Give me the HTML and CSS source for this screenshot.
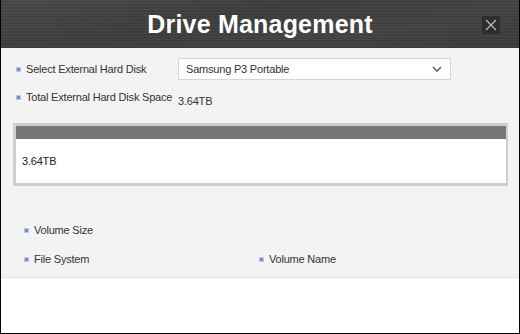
FILE: index.html
```html
<!DOCTYPE html>
<html lang="en">
<head>
    <meta charset="UTF-8">
    <title>Drive Management</title>
    <link rel="stylesheet" href="styles.css">
</head>
<body>
    <div class="window">
        <div class="header">
            <h1>Drive Management</h1>
            <div class="close-button">
                <svg width="12" height="12" viewBox="0 0 12 12">
                    <path d="M1 1 L11 11 M11 1 L1 11" stroke="#bdbdbd" stroke-width="1.2" fill="none"/>
                </svg>
            </div>
        </div>

        <div class="content">
            <div class="row">
                <span class="label"><i class="bullet"></i>Select External Hard Disk</span>
                <div class="select-box">
                    <span>Samsung P3 Portable</span>
                    <svg width="10" height="7" viewBox="0 0 10 7">
                        <path d="M1 1 L5 5 L9 1" stroke="#666" stroke-width="1.6" fill="none"/>
                    </svg>
                </div>
            </div>

            <div class="row row-total">
                <span class="label"><i class="bullet"></i>Total External Hard Disk Space</span>
                <span class="value">3.64TB</span>
            </div>

            <div class="disk-bar">
                <div class="disk-bar-top"></div>
                <div class="disk-bar-body">3.64TB</div>
            </div>

            <div class="volume-info">
                <span class="label"><i class="bullet"></i>Volume Size</span>
                <div class="volume-row">
                    <span class="label col"><i class="bullet"></i>File System</span>
                    <span class="label"><i class="bullet"></i>Volume Name</span>
                </div>
            </div>
        </div>

        <div class="footer"></div>
    </div>
</body>
</html>
```

FILE: styles.css
```css
:root {
    --panel-color: #f3f3f3;
    --text-color: #333;
    --bullet-color: #6e8fcf;
    --border-color: #cfcfcf;
}
body {
    margin: 0;
    padding: 0;
    font-family: "Liberation Sans", Arial, sans-serif;
    font-size: 11px;
    letter-spacing: -0.2px;
    color: var(--text-color);
}
.window {
    width: 520px;
    height: 334px;
    box-sizing: border-box;
    border: 1px solid #000;
    border-top: none;
    display: flex;
    flex-direction: column;
    background: #fff;
}
.header {
    height: 48px;
    flex-shrink: 0;
    position: relative;
    display: flex;
    align-items: center;
    justify-content: center;
    background:
        repeating-linear-gradient(180deg, rgba(255, 255, 255, 0.03) 0 1px, rgba(0, 0, 0, 0.04) 1px 3px),
        linear-gradient(170deg, #4a4a4a 0%, #3e3e3e 40%, #444 70%, #3a3a3a 100%);
}
h1 {
    margin: 0;
    color: #fff;
    font-size: 25px;
    font-weight: bold;
    letter-spacing: 0.2px;
}
.close-button {
    position: absolute;
    top: 16px;
    right: 19px;
    width: 18px;
    height: 18px;
    background: #2e2e2e;
    display: flex;
    align-items: center;
    justify-content: center;
}
.content {
    background: var(--panel-color);
    height: 230px;
    flex-shrink: 0;
    border-bottom: 1px solid #e2e2e2;
    padding: 10px 12px 0 15px;
    box-sizing: border-box;
}
.row {
    display: flex;
    align-items: center;
    height: 22px;
}
.row-total {
    margin-top: 11px;
    height: 18px;
    align-items: flex-start;
}
.label {
    display: inline-flex;
    align-items: center;
    white-space: nowrap;
}
.row .label {
    width: 162px;
    flex-shrink: 0;
}
.bullet {
    width: 5px;
    height: 5px;
    background: var(--bullet-color);
    border: 1px solid #b9c9ea;
    box-sizing: border-box;
    margin-right: 5px;
}
.select-box {
    width: 273px;
    height: 22px;
    box-sizing: border-box;
    background: #fff;
    border: 1px solid #d6d6d6;
    display: flex;
    align-items: center;
    justify-content: space-between;
    padding: 0 8px 0 7px;
}
.value {
    margin-top: 4px;
}
.disk-bar {
    margin: 14px 0 0 -3px;
    width: 495px;
    height: 63px;
    box-sizing: border-box;
    border: 3px solid var(--border-color);
    border-right-width: 2px;
    background: #fff;
}
.disk-bar-top {
    height: 13px;
    background: #777;
}
.disk-bar-body {
    padding: 16px 0 0 6px;
    color: #222;
}
.volume-info {
    margin-top: 38px;
    padding-left: 8px;
    display: flex;
    flex-direction: column;
    gap: 17px;
}
.volume-row {
    display: flex;
}
.volume-row .col {
    width: 235px;
}
.footer {
    flex: 1;
    background: #fff;
}
```
